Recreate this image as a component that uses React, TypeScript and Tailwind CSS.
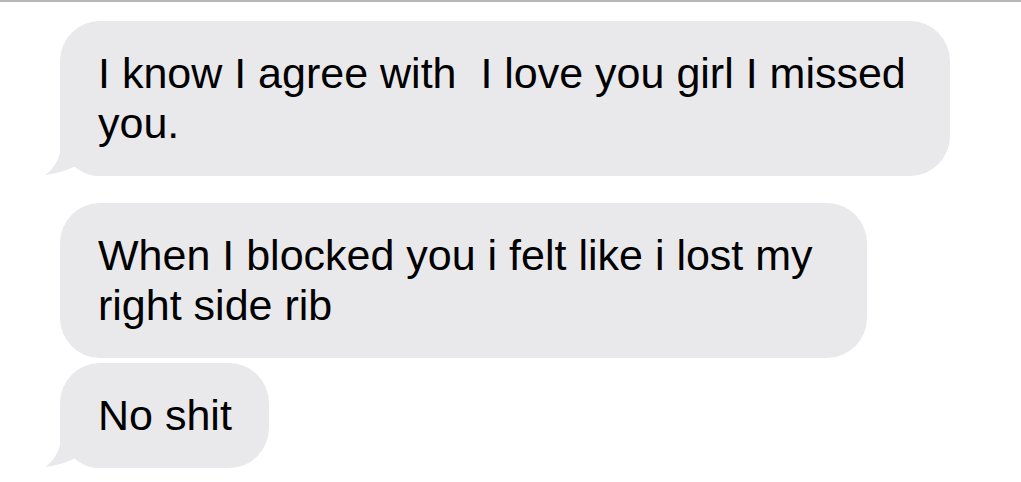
import React from "react";

const BUBBLE = "#e9e9eb";

function Tail() {
  return (
    <svg
      className="absolute left-[-20px] bottom-0"
      width="80"
      height="50"
      viewBox="0 0 80 50"
    >
      <path
        d="M20 0 L20 27 Q16 42 5 49 Q22 47 38 39 Q44 49 56 50 L80 50 L80 0 Z"
        fill={BUBBLE}
      />
    </svg>
  );
}

function Bubble({
  width,
  tail,
  children,
}: {
  width: string;
  tail?: boolean;
  children: React.ReactNode;
}) {
  return (
    <div className={`relative ${width}`}>
      {tail && <Tail />}
      <div className="relative rounded-[40px] bg-[#e9e9eb] pl-[38px] pr-[30px] pt-[27px] pb-[28px] text-[43px] leading-[50px] text-black whitespace-pre">
        {children}
      </div>
    </div>
  );
}

export default function App() {
  return (
    <div className="w-[1021px] h-[482px] bg-white overflow-hidden font-['Liberation_Sans',Arial,sans-serif]">
      <div className="h-[2px] bg-[#b8b8b8]" />
      <div className="flex flex-col items-start pl-[60px] pt-[19px]">
        <Bubble width="w-[890px]" tail>
          {"I know I agree with  I love you girl I missed"}
          <br />
          {"you."}
        </Bubble>
        <div className="h-[27px]" />
        <Bubble width="w-[807px]">
          {"When I blocked you i felt like i lost my"}
          <br />
          {"right side rib"}
        </Bubble>
        <div className="h-[5px]" />
        <Bubble width="w-[209px]" tail>
          {"No shit"}
        </Bubble>
      </div>
    </div>
  );
}
